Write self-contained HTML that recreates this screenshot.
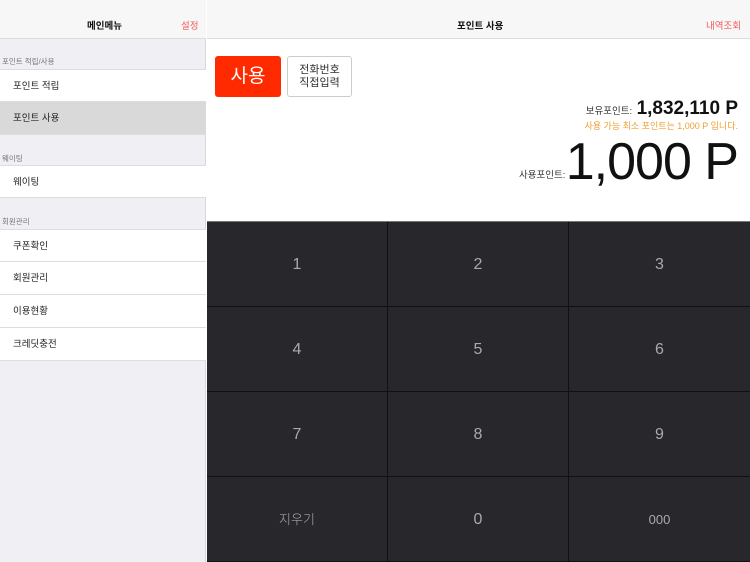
<!DOCTYPE html>
<html><head><meta charset="utf-8"><style>
*{margin:0;padding:0;box-sizing:border-box}
body{width:750px;height:562px;overflow:hidden;position:relative;font-family:"Liberation Sans","Noto Sans CJK KR",sans-serif;background:#fff}
.side{position:absolute;left:0;top:0;width:206px;height:562px;background:#efeff4;border-right:1px solid #d8d8d8}
.hdr{position:absolute;top:0;height:39px;background:#f7f7f7;border-bottom:1px solid #dcdcdc}
.t{position:absolute;font-size:9.5px;color:#111;font-weight:bold}
.red{color:#f05a5a;font-weight:normal}
.lbl{position:absolute;left:2px;font-size:7.5px;color:#777}
.it{position:absolute;left:0;width:206px;height:33px;background:#fff;border-bottom:1px solid #ddd;font-size:9.5px;line-height:33px;padding-left:13px;color:#222}
.kp{position:absolute;left:207px;top:221px;width:543px;height:341px;background:#28272b;border-top:1px solid #777}
.c{position:absolute;width:181px;height:85px;border-right:1px solid #111;border-bottom:1px solid #111;color:#aaa;font-size:16px;text-align:center;line-height:85px;font-weight:300}
</style></head><body>
<div class="side">
<div class="hdr" style="left:0;width:206px"></div>
<div class="t" style="left:87px;top:18px">메인메뉴</div>
<div class="t red" style="left:181px;top:18px">설정</div>
<div class="lbl" style="top:56px">포인트 적립/사용</div>
<div class="it" style="top:69px;border-top:1px solid #ddd">포인트 적립</div>
<div class="it" style="top:102px;background:#d9d9d9">포인트 사용</div>
<div class="lbl" style="top:153px">웨이팅</div>
<div class="it" style="top:165px;border-top:1px solid #ddd">웨이팅</div>
<div class="lbl" style="top:216px">회원관리</div>
<div class="it" style="top:229px;border-top:1px solid #ddd">쿠폰확인</div>
<div class="it" style="top:262px">회원관리</div>
<div class="it" style="top:295px">이용현황</div>
<div class="it" style="top:328px">크레딧충전</div>
</div>
<div class="hdr" style="left:207px;width:543px"></div>
<div class="t" style="left:457px;top:18px">포인트 사용</div>
<div class="t red" style="left:706px;top:18px">내역조회</div>
<div style="position:absolute;left:215px;top:56px;width:66px;height:41px;background:#ff2a00;border-radius:3px;color:#fff;font-size:19px;text-align:center;line-height:41px">사용</div>
<div style="position:absolute;left:287px;top:56px;width:65px;height:41px;border:1px solid #ccc;border-radius:3px;color:#333;font-size:11px;text-align:center;line-height:13px;padding-top:7px">전화번호<br>직접입력</div>
<div style="position:absolute;right:12px;top:98px;white-space:nowrap"><span style="font-size:9.5px;color:#333">보유포인트:</span> <span style="font-size:19px;font-weight:bold;color:#111">1,832,110 P</span></div>
<div style="position:absolute;right:12px;top:119px;font-size:9px;color:#f0a030">사용 가능 최소 포인트는 1,000 P 입니다.</div>
<div style="position:absolute;left:519px;top:167px;font-size:9.5px;color:#333">사용포인트:</div>
<div style="position:absolute;right:12px;top:134px;white-space:nowrap;font-size:52px;color:#111;letter-spacing:-1px;line-height:56px">1,000 P</div>
<div class="kp">
<div class="c" style="left:0;top:0">1</div><div class="c" style="left:181px;top:0">2</div><div class="c" style="left:362px;top:0;border-right:0">3</div>
<div class="c" style="left:0;top:85px">4</div><div class="c" style="left:181px;top:85px">5</div><div class="c" style="left:362px;top:85px;border-right:0">6</div>
<div class="c" style="left:0;top:170px">7</div><div class="c" style="left:181px;top:170px">8</div><div class="c" style="left:362px;top:170px;border-right:0">9</div>
<div class="c" style="left:0;top:255px;font-size:13px">지우기</div><div class="c" style="left:181px;top:255px">0</div><div class="c" style="left:362px;top:255px;border-right:0;font-size:13px">000</div>
</div>
</body></html>
